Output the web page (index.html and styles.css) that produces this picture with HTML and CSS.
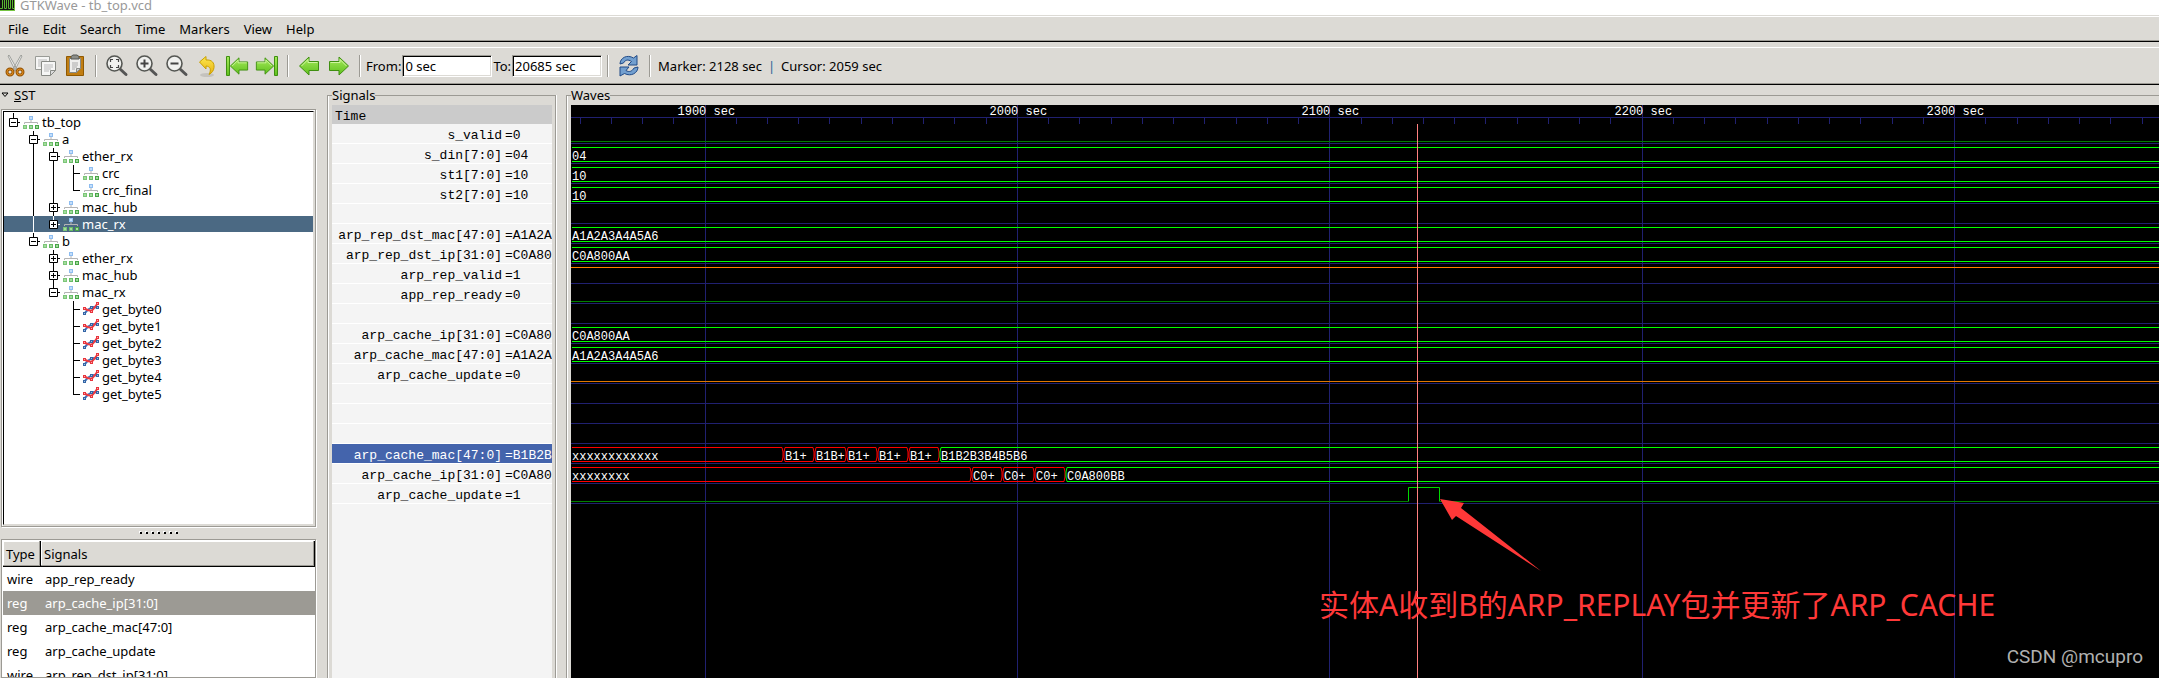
FILE: index.html
```html
<!DOCTYPE html>
<html lang="en">
<head>
    <meta charset="UTF-8">
    <meta name="viewport" content="width=device-width, initial-scale=1.0">
    <title>GTKWave - tb_top.vcd</title>
    <link rel="stylesheet" href="styles.css">
</head>
<body>
    <!-- shared icons -->
    <svg class="defs" aria-hidden="true">
        <defs>
            <linearGradient id="green" x1="0" y1="0" x2="0" y2="1">
                <stop offset="0" stop-color="#a6ea5c"/>
                <stop offset="1" stop-color="#5fc01c"/>
            </linearGradient>
            <linearGradient id="gold" x1="0" y1="0" x2="0" y2="1">
                <stop offset="0" stop-color="#fce94f"/>
                <stop offset="1" stop-color="#e8b010"/>
            </linearGradient>
            <symbol id="module" viewBox="0 0 16 14">
                <path d="M8 5v3M1.500 9V7.500h13V9" fill="none" stroke="#b4b4b4"/>
                <path d="M6 1h4v4H6z" fill="#8ebdf0"/>
                <path d="M7 2h2v2H7z" fill="#c4defa"/>
                <path d="M0 10h4v4H0z" fill="#7cc578"/>
                <path d="M6 10h4v4H6z" fill="#68bb66"/>
                <path d="M12 10h4v4h-4z" fill="#48a448"/>
                <path d="M1 11h2v2H1zM7 11h2v2H7zM13 11h2v2h-2z" fill="#a2dc9c"/>
            </symbol>
            <symbol id="func" viewBox="0 0 16 14">
                <path d="M1.500 11.500L4.500 8l5-3 5 .5" fill="none" stroke="#3f72bd" stroke-width="2"/>
                <path d="M1.500 6.500l3 1.500 4 1 3-3.500 3-4" fill="none" stroke="#ee3a40" stroke-width="2"/>
                <path d="M0 10h3v3H0zM7 4h3v3H7zM13 4h3v3h-3z" fill="#3465a4"/>
                <path d="M0 5h3v3H0zM7 8h3v3H7zM13 0h3v3h-3z" fill="#e8343c"/>
                <path d="M1 11h1v1H1zM8 5h1v1H8zM14 5h1v1h-1z" fill="#9fc0ea"/>
                <path d="M1 6h1v1H1zM8 9h1v1H8zM14 1h1v1h-1z" fill="#ffaaaa"/>
            </symbol>
            <symbol id="lens" viewBox="0 0 24 24">
                <path d="M14.500 14.500l6.500 6" stroke="#555" stroke-width="3" stroke-linecap="round"/>
                <circle cx="9.500" cy="9.500" r="7.500" fill="#f0f1ef" stroke="#555753" stroke-width="1.600"/>
            </symbol>
            <symbol id="arrow-left" viewBox="0 0 22 22">
                <path d="M1.500 11L11 2v4.500h9.500v9H11V20z" fill="url(#green)" stroke="#3f8f10" stroke-linejoin="round"/>
                <path d="M3.500 11L10 4.500v3h9.500" fill="none" stroke="#d0f5a0"/>
            </symbol>
        </defs>
    </svg>

    <header class="titlebar">
        <svg width="15" height="16" viewBox="0 0 15 16">
            <path d="M0 0h15v16H0z" fill="#76c442"/>
            <path d="M0 0h14v15H0z" fill="#111"/>
            <path d="M0 13.500h2.500V4.500h2v9h2v-9h2v9h2v-9h2v9H14" fill="none" stroke="#58b530"/>
        </svg>
        <span>GTKWave - tb_top.vcd</span>
    </header>

    <nav class="menubar">
        <a href="#">File</a>
        <a href="#">Edit</a>
        <a href="#">Search</a>
        <a href="#">Time</a>
        <a href="#">Markers</a>
        <a href="#">View</a>
        <a href="#">Help</a>
    </nav>

    <div class="toolbar">
        <button type="button" aria-label="Cut">
            <svg width="24" height="24" viewBox="0 0 24 24">
                <path d="M5 2l1-1 8.500 15-2 1zM19 2l-1-1-8.500 15 2 1z" fill="#eee" stroke="#8d8f8a" stroke-width=".8"/>
                <circle cx="7" cy="18" r="3" fill="none" stroke="#9a5706" stroke-width="3"/>
                <circle cx="17" cy="18" r="3" fill="none" stroke="#9a5706" stroke-width="3"/>
                <circle cx="7" cy="18" r="3" fill="none" stroke="#dd8a1c"/>
                <circle cx="17" cy="18" r="3" fill="none" stroke="#dd8a1c"/>
            </svg>
        </button>
        <button type="button" aria-label="Copy">
            <svg width="24" height="24" viewBox="0 0 24 24">
                <path d="M2.500 2.500h14v13h-14z" fill="#f6f6f5" stroke="#999b96"/>
                <path d="M5 6h9M5 8h3M5 10h3M5 12h3" stroke="#bbb"/>
                <path d="M8.500 7.500h14v9l-5 5h-9z" fill="#f6f6f5" stroke="#888a85"/>
                <path d="M11 11h9M11 13h9M11 15h7M11 17h5" stroke="#bbb"/>
                <path d="M17.500 21.500v-5h5z" fill="#ddd" stroke="#888a85"/>
            </svg>
        </button>
        <button type="button" aria-label="Paste">
            <svg width="24" height="24" viewBox="0 0 24 24">
                <path d="M3.500 2.500h17v19h-17z" fill="#c17d11" stroke="#8f5902"/>
                <path d="M6.500 4.500h11v10l-4 4h-7z" fill="#eeeeec" stroke="#888a85"/>
                <path d="M9 9h6M9 11h6M9 13h5M9 15h3" stroke="#aaa"/>
                <path d="M13.500 18.500v-4h4z" fill="#ccc" stroke="#888a85"/>
                <path d="M8 5V2.500l2-1.500h4l2 1.500V5z" fill="#8c8e89" stroke="#555753"/>
            </svg>
        </button>
        <span class="sep"></span>
        <button type="button" aria-label="Zoom fit">
            <svg width="24" height="24" viewBox="0 0 24 24">
                <use href="#lens"/>
                <path d="M5.500 8V5.500H8M11 5.500h2.500V8M13.500 11v2.500H11M8 13.500H5.500V11" fill="none" stroke="#444" stroke-width="1.200"/>
            </svg>
        </button>
        <button type="button" aria-label="Zoom in">
            <svg width="24" height="24" viewBox="0 0 24 24">
                <use href="#lens"/>
                <path d="M5.500 9.500h8M9.500 5.500v8" stroke="#444" stroke-width="2"/>
            </svg>
        </button>
        <button type="button" aria-label="Zoom out">
            <svg width="24" height="24" viewBox="0 0 24 24">
                <use href="#lens"/>
                <path d="M5.500 9.500h8" stroke="#444" stroke-width="2"/>
            </svg>
        </button>
        <button type="button" aria-label="Undo zoom">
            <svg width="24" height="24" viewBox="0 0 24 24">
                <ellipse cx="12" cy="21" rx="7" ry="2" fill="#c4c2bd"/>
                <path d="M4.500 8L11 2.500V6c6-.5 8.500 3 8 7.500-.3 3-2 5.500-5 7 2.500-5 1.500-8-3-8.500v3z" fill="url(#gold)" stroke="#c9a000" stroke-linejoin="round"/>
            </svg>
        </button>
        <button type="button" aria-label="Go to start">
            <svg width="24" height="24" viewBox="0 0 24 24">
                <path d="M1.500 2.500h3v19h-3z" fill="url(#green)" stroke="#3f8f10"/>
                <use href="#arrow-left" x="4" y="1" width="20" height="22"/>
            </svg>
        </button>
        <button type="button" aria-label="Go to end">
            <svg width="24" height="24" viewBox="0 0 24 24">
                <g transform="matrix(-1 0 0 1 24 0)">
                    <path d="M1.500 2.500h3v19h-3z" fill="url(#green)" stroke="#3f8f10"/>
                    <use href="#arrow-left" x="4" y="1" width="20" height="22"/>
                </g>
            </svg>
        </button>
        <span class="sep"></span>
        <button type="button" aria-label="Previous edge">
            <svg width="24" height="24" viewBox="0 0 24 24"><use href="#arrow-left" x="1" y="1" width="22" height="22"/></svg>
        </button>
        <button type="button" aria-label="Next edge">
            <svg width="24" height="24" viewBox="0 0 24 24">
                <g transform="matrix(-1 0 0 1 24 0)"><use href="#arrow-left" x="1" y="1" width="22" height="22"/></g>
            </svg>
        </button>
        <span class="sep"></span>
        <div class="range">
            <label for="from">From:</label>
            <input type="text" id="from" value="0 sec">
            <label for="to">To:</label>
            <input type="text" id="to" value="20685 sec">
        </div>
        <span class="sep"></span>
        <button type="button" aria-label="Reload">
            <svg width="24" height="24" viewBox="0 0 24 24">
                <path d="M3 10C3 4 10 0 16.500 4L20 1.500V11h-9l3.500-3.500C11 5 8 6 6.500 9z" fill="#729fcf" stroke="#204a87" stroke-linejoin="round"/>
                <path d="M21 13c0 6-7 10-13.500 6.500L3 22v-9h9l-3 3.500c3 2 6 1 8-2.500z" fill="#729fcf" stroke="#204a87" stroke-linejoin="round"/>
            </svg>
        </button>
        <span class="sep"></span>
        <div class="status">
            <span>Marker: 2128 sec</span>
            <span class="bar">|</span>
            <span>Cursor: 2059 sec</span>
        </div>
    </div>

    <main class="panes">
        <section class="sst">
            <div class="sst-title">
                <svg width="8" height="6" viewBox="0 0 8 6"><path d="M1 1h6L4 4.500z" fill="#dcdad5" stroke="#000"/></svg>
                <span><u>S</u>ST</span>
            </div>
            <div class="frame tree-frame">
                <ul class="tree" id="tree"></ul>
            </div>
            <div class="grip"><i></i><i></i><i></i><i></i><i></i><i></i><i></i></div>
            <div class="frame list-frame">
                <table class="list">
                    <thead>
                        <tr><th class="type">Type</th><th>Signals</th></tr>
                    </thead>
                    <tbody>
                        <tr><td>wire</td><td>app_rep_ready</td></tr>
                        <tr class="selected"><td>reg</td><td>arp_cache_ip[31:0]</td></tr>
                        <tr><td>reg</td><td>arp_cache_mac[47:0]</td></tr>
                        <tr><td>reg</td><td>arp_cache_update</td></tr>
                        <tr><td>wire</td><td>arp_rep_dst_ip[31:0]</td></tr>
                    </tbody>
                </table>
            </div>
        </section>

        <fieldset class="signals">
            <legend>Signals</legend>
            <div class="signal-list">
                <div class="time">Time</div>
                <div id="signals"></div>
            </div>
        </fieldset>

        <fieldset class="waves">
            <legend>Waves</legend>
            <div class="canvas">
                <svg id="wave" width="100%" height="100%"></svg>
                <p class="note">实体A收到B的ARP_REPLAY包并更新了ARP_CACHE</p>
                <p class="watermark">CSDN @mcupro</p>
            </div>
        </fieldset>
    </main>

    <script src="wave.js"></script>
</body>
</html>
```
FILE: styles.css
```css
* {
    box-sizing: border-box;
}

body {
    margin: 0;
    height: 100vh;
    display: flex;
    flex-direction: column;
    overflow: hidden;
    background: #dcdad5;
    color: #000;
    font-family: "Noto Sans", sans-serif;
    font-size: 13px;
    line-height: 16px;
}

.defs {
    position: absolute;
    width: 0;
    height: 0;
}

svg {
    display: block;
}

/* top bars */
.titlebar {
    flex: none;
    height: 16px;
    display: flex;
    align-items: flex-end;
    gap: 5px;
    overflow: hidden;
    background: #fff;
    border-bottom: 1px solid #dcdad5;
    color: #999;
    line-height: 20px;
}

.titlebar svg {
    margin-bottom: 4px;
}

.menubar {
    flex: none;
    height: 26px;
    display: flex;
    align-items: center;
    gap: 14px;
    padding-left: 8px;
    border-top: 1px solid #fff;
    border-bottom: 1px solid #000;
    box-shadow: inset 0 -1px #9c9a94;
}

.menubar a {
    color: #000;
    text-decoration: none;
}

.toolbar {
    flex: none;
    height: 38px;
    margin-top: 5px;
    display: flex;
    align-items: center;
    border-top: 1px solid #fff;
    border-bottom: 1px solid #000;
    box-shadow: inset 0 -1px #9c9a94;
}

.toolbar button {
    width: 30px;
    height: 30px;
    padding: 3px;
    border: none;
    background: none;
}

.sep {
    width: 2px;
    height: 22px;
    margin: 0 5px;
    border-left: 1px solid #9c9a94;
    border-right: 1px solid #fff;
}

.range {
    display: flex;
    align-items: center;
    gap: 1px;
}

.range input {
    width: 90px;
    height: 22px;
    padding: 0 2px;
    border: 1px solid;
    border-color: #9c9a94 #fff #fff #9c9a94;
    box-shadow: inset 1px 1px #000, inset -1px -1px #dcdad5;
    background: #fff;
    color: #000;
    font: inherit;
}

.status {
    display: flex;
    gap: 6px;
    padding-left: 2px;
}

.bar {
    color: #2a6496;
}

/* panes */
.panes {
    flex: 1;
    min-height: 0;
    display: flex;
}

.frame {
    border: 1px solid #9c9a94;
    box-shadow: 1px 1px #fff, inset 1px 1px #fff;
}

.sst {
    flex: none;
    width: 327px;
    display: flex;
    flex-direction: column;
    padding: 0 11px 0 1px;
}

.sst-title {
    display: flex;
    align-items: center;
    gap: 5px;
    height: 24px;
    padding-bottom: 4px;
}

.tree-frame {
    height: 418px;
    padding: 1px;
}

.tree {
    height: 100%;
    margin: 0;
    padding: 2px 0 0 0;
    list-style: none;
    background: #fff;
    border: 1px solid;
    border-color: #000 #dcdad5 #dcdad5 #000;
}

.tree li {
    height: 17px;
    display: flex;
    align-items: center;
    border-bottom: 1px solid #fff;
}

.tree li.selected {
    background: #4b6983;
    color: #fff;
}

.tree svg {
    flex: none;
    overflow: visible;
}

.tree .icon {
    margin-right: 3px;
}

.grip {
    height: 12px;
    display: flex;
    align-items: center;
    justify-content: center;
    gap: 4px;
}

.grip i {
    width: 2px;
    height: 2px;
    background: #000;
    box-shadow: -1px -1px #fff;
}

.list-frame {
    flex: 1;
    min-height: 0;
    overflow: hidden;
    background: #fff;
    padding: 1px 0 0 1px;
}

.list {
    width: 100%;
    border-collapse: separate;
    border-spacing: 0;
}

.list th {
    height: 26px;
    padding: 0 3px;
    background: #dcdad5;
    border-right: 1px solid #000;
    border-bottom: 1px solid #000;
    box-shadow: inset -1px -1px #9c9a94, inset 1px 1px #fff;
    font-weight: normal;
    text-align: left;
}

.list .type {
    width: 38px;
}

.list td {
    height: 24px;
    padding: 0 4px;
}

.list .selected td {
    background: #9c9a94;
    color: #fff;
}

fieldset {
    min-width: 0;
    margin: 0;
    padding: 0 0 0 4px;
    border: 1px solid #9c9a94;
    border-bottom: none;
    box-shadow: inset 1px 0 #fff, 1px 0 #fff;
    display: flex;
    flex-direction: column;
}

legend {
    padding: 0;
    line-height: 20px;
}

.signals {
    flex: none;
    width: 229px;
    padding-right: 3px;
}

.signal-list {
    height: 100%;
    overflow: hidden;
    background: #f4f4f4;
    font: 13px/18px "Liberation Mono", monospace;
}

.time {
    height: 19px;
    padding: 4px 3px 0;
    background: #cbcbcb;
    line-height: 16px;
}

.signal {
    height: 20px;
    display: grid;
    grid-template-columns: 170px 1fr;
    gap: 3px;
    padding-top: 2px;
    border-bottom: 1px solid #fff;
    line-height: 19px;
}

.signal span {
    min-width: 0;
    overflow: hidden;
}

.signal span:first-child {
    text-align: right;
}

.signal.selected {
    background: #4464ac;
    color: #fff;
}

.waves {
    flex: 1;
    margin-left: 10px;
    border-right: none;
}

.canvas {
    position: relative;
    height: 100%;
    overflow: hidden;
    background: #000;
}

.canvas text {
    fill: #fff;
    font: 12px "Liberation Mono", monospace;
}

.note {
    position: absolute;
    left: 748px;
    top: 480px;
    margin: 0;
    color: #ff3838;
    font: 30px/40px "Noto Sans", "Noto Sans CJK SC", sans-serif;
    white-space: nowrap;
}

.watermark {
    position: absolute;
    right: 16px;
    bottom: 8px;
    margin: 0;
    color: #b0b0b0;
    font: 19px/26px Roboto, sans-serif;
}
```
FILE: wave.js
```js
// hierarchy: [depth, name, kind, expander]
const nodes = [
    [0, 'tb_top', 'module', '-'],
    [1, 'a', 'module', '-'],
    [2, 'ether_rx', 'module', '-'],
    [3, 'crc', 'module', ''],
    [3, 'crc_final', 'module', ''],
    [2, 'mac_hub', 'module', '+'],
    [2, 'mac_rx', 'module', '+'],
    [1, 'b', 'module', '-'],
    [2, 'ether_rx', 'module', '+'],
    [2, 'mac_hub', 'module', '+'],
    [2, 'mac_rx', 'module', '-'],
    [3, 'get_byte0', 'func', ''],
    [3, 'get_byte1', 'func', ''],
    [3, 'get_byte2', 'func', ''],
    [3, 'get_byte3', 'func', ''],
    [3, 'get_byte4', 'func', ''],
    [3, 'get_byte5', 'func', '']
];

// is there a later sibling at this depth before the parent closes
function continues(index, depth) {
    for (let i = index + 1; i < nodes.length; i++) {
        if (nodes[i][0] < depth) return false;
        if (nodes[i][0] === depth) return true;
    }
    return false;
}

document.getElementById('tree').innerHTML = nodes.map(([depth, name, kind, box], i) => {
    const selected = i === 6;
    const width = depth * 20 + 19;
    const x = depth * 20 + 9;
    let lines = '';
    for (let d = 1; d < depth; d++) {
        if (continues(i, d)) lines += `M${d * 20 + 9.5} 0v17`;
    }
    lines += `M${x + .5} ${i ? 0 : -1}V${continues(i, depth) ? 17 : 8}M${x} 8.5h7`;
    let expander = '';
    if (box) {
        expander = `<path d="M${x - 3.5} 4.5h8v8h-8z" fill="#fff" stroke="#000"/>
            <path d="M${x - 2} 8.5h5${box === '+' ? `M${x + .5} 6v5` : ''}" stroke="#000"/>`;
    }
    return `<li${selected ? ' class="selected"' : ''}>
        <svg width="${width}" height="17"><path d="${lines}" fill="none" stroke="${selected ? '#fff' : '#000'}"/>${expander}</svg>
        <svg class="icon" width="16" height="14"><use href="#${kind}"/></svg>${name}</li>`;
}).join('');

// traces: bus values are [start x, text, colour]
const GREEN = '#00ff00', RED = '#ff0000';
const signals = [
    { name: 's_valid', value: '0', low: '#008000' },
    { name: 's_din[7:0]', value: '04', bus: [[0, '04', GREEN]] },
    { name: 'st1[7:0]', value: '10', bus: [[0, '10', GREEN]] },
    { name: 'st2[7:0]', value: '10', bus: [[0, '10', GREEN]] },
    {},
    { name: 'arp_rep_dst_mac[47:0]', value: 'A1A2A3A4A5A6', bus: [[0, 'A1A2A3A4A5A6', GREEN]] },
    { name: 'arp_rep_dst_ip[31:0]', value: 'C0A800AA', bus: [[0, 'C0A800AA', GREEN]] },
    { name: 'arp_rep_valid', value: '1', high: '#ff8000' },
    { name: 'app_rep_ready', value: '0', low: '#008000' },
    {},
    { name: 'arp_cache_ip[31:0]', value: 'C0A800AA', bus: [[0, 'C0A800AA', GREEN]] },
    { name: 'arp_cache_mac[47:0]', value: 'A1A2A3A4A5A6', bus: [[0, 'A1A2A3A4A5A6', GREEN]] },
    { name: 'arp_cache_update', value: '0', low: '#e07800' },
    {},
    {},
    {},
    { name: 'arp_cache_mac[47:0]', value: 'B1B2B3B4B5B6', selected: true, bus: [
        [0, 'xxxxxxxxxxxx', RED], [212, 'B1+', RED], [243, 'B1B+', RED], [275, 'B1+', RED],
        [306, 'B1+', RED], [337, 'B1+', RED], [368, 'B1B2B3B4B5B6', GREEN]] },
    { name: 'arp_cache_ip[31:0]', value: 'C0A800BB', bus: [
        [0, 'xxxxxxxx', RED], [400, 'C0+', RED], [431, 'C0+', RED], [463, 'C0+', RED],
        [494, 'C0A800BB', GREEN]] },
    { name: 'arp_cache_update', value: '1', low: '#008000', pulse: [837, 868] }
];

document.getElementById('signals').innerHTML = signals.map(s =>
    `<div class="signal${s.selected ? ' selected' : ''}"><span>${s.name || ''}</span><span>${s.name ? '=' + s.value : ''}</span></div>`
).join('');

const HEADER = 19, ROW = 20, FIRST = 134, STEP = 312.4;
const line = (x1, y1, x2, y2, color) =>
    `<line x1="${x1}" y1="${y1}" x2="${x2}" y2="${y2}" stroke="${color}"/>`;

let out = line(0, 12.5, '100%', 12.5, '#202070');

// time grid
for (let k = -4; k < 60; k++) {
    const x = Math.floor(FIRST + k * STEP / 10) + .5;
    out += line(x, 13, x, 19, '#202070');
}
for (let k = 0; k < 6; k++) {
    const x = Math.floor(FIRST + k * STEP) + .5;
    out += line(x, 0, x, '100%', '#202070');
    out += `<text x="${x - 28}" y="10">${1900 + k * 100} sec</text>`;
}

signals.forEach((s, i) => {
    const y = HEADER + i * ROW;
    const top = y + 3.5, bottom = y + 17.5;
    out += line(0, y + 19.5, '100%', y + 19.5, '#202070');
    if (s.high) out += line(0, top, '100%', top, s.high);
    if (s.low && !s.pulse) out += line(0, bottom, '100%', bottom, s.low);
    if (s.pulse) {
        const [a, b] = s.pulse;
        out += line(0, bottom, a, bottom, s.low) + line(b + 1, bottom, '100%', bottom, s.low);
        out += `<path d="M${a + .5} ${bottom}V${top}H${b + .5}V${bottom}" fill="none" stroke="#00d800"/>`;
    }
    (s.bus || []).forEach(([x, text, color], n) => {
        const next = s.bus[n + 1];
        const start = n ? x + 2 : 1;
        const end = next ? next[0] - 1 : '100%';
        out += line(start, top, end, top, color) + line(start, bottom, end, bottom, color);
        if (next) {
            const c = next[0];
            out += `<path d="M${c - 1} ${top}L${c} ${y + 8}V${y + 13}L${c - 1} ${bottom}" fill="none" stroke="${color}"/>`;
            out += `<path d="M${c + 2} ${top}L${c + 1} ${y + 8}V${y + 13}L${c + 2} ${bottom}" fill="none" stroke="${next[2]}"/>`;
        }
        out += `<text x="${n ? x + 2 : 1}" y="${y + 16}">${text}</text>`;
    });
});

// marker and callout arrow
out += line(846.5, 19, 846.5, '100%', '#ff8080');
out += '<path d="M869 394L893 398L890 403L970 466L885 411L881 415Z" fill="#ff3838"/>';

document.getElementById('wave').innerHTML = out;
```
